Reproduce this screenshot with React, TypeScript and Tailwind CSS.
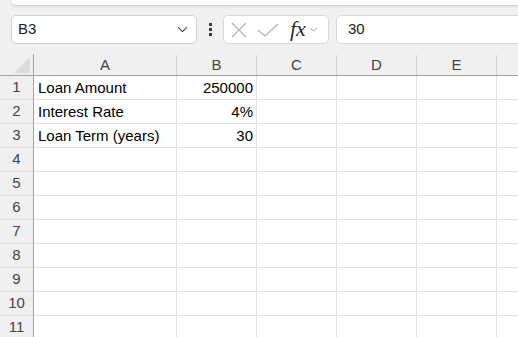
import { ChevronDown } from 'lucide-react';

const columns = ['A', 'B', 'C', 'D', 'E', 'F'];

const data: Record<number, { a?: string; b?: string }> = {
  1: { a: 'Loan Amount', b: '250000' },
  2: { a: 'Interest Rate', b: '4%' },
  3: { a: 'Loan Term (years)', b: '30' },
};

const rows = Array.from({ length: 11 }, (_, i) => i + 1);

function App() {
  return (
    <div
      className="w-[518px] h-[337px] overflow-hidden bg-[#f0f0f0] text-black"
      style={{ fontFamily: '"Liberation Sans", Arial, sans-serif' }}
    >
      {/* ribbon bottom edge */}
      <div className="h-[5px] ml-[11px] -mr-4 bg-white rounded-bl-lg shadow-[0_1px_3px_rgba(0,0,0,0.18)]" />

      {/* formula bar */}
      <div className="flex items-stretch h-[29px] mt-[10px] pl-[11px] -mr-4">
        <div className="w-[186px] flex items-center justify-between bg-white border border-[#d1d1d1] rounded-[5px] pl-[6px] pr-[5px]">
          <span className="text-[15px] text-[#1b1b1b]">B3</span>
          <ChevronDown size={17} strokeWidth={1.5} className="text-[#404040]" />
        </div>
        <div className="w-[26px] flex flex-col items-center justify-center gap-[2px]">
          <span className="w-[3px] h-[3px] bg-[#3c3c3c]" />
          <span className="w-[3px] h-[3px] bg-[#3c3c3c]" />
          <span className="w-[3px] h-[3px] bg-[#3c3c3c]" />
        </div>
        <div className="w-[106px] flex items-center bg-white border border-[#d9d9d9] rounded-[5px] pl-[7px]">
          <svg width="16" height="16" viewBox="0 0 16 16" className="text-[#b5b5b5]">
            <path d="M1 1 L15 15 M15 1 L1 15" stroke="currentColor" strokeWidth="1.3" fill="none" />
          </svg>
          <svg width="22" height="14" viewBox="0 0 22 14" className="ml-[10px] text-[#b5b5b5]">
            <path d="M1 7 L8 13 L21 1" stroke="currentColor" strokeWidth="1.3" fill="none" />
          </svg>
          <span
            className="ml-[11px] text-[22px] italic text-[#2b2b2b] leading-none -mt-[2px]"
            style={{ fontFamily: '"Liberation Serif", "Times New Roman", serif' }}
          >
            fx
          </span>
          <ChevronDown size={13} strokeWidth={1.4} className="ml-[1px] text-[#8a8a8a]" />
        </div>
        <div className="flex-1 ml-[7px] flex items-center bg-white border border-[#d9d9d9] rounded-[5px] pl-[11px]">
          <span className="text-[15px] text-[#1b1b1b]">30</span>
        </div>
      </div>

      {/* grid */}
      <div className="mt-[10px] overflow-hidden">
        <div className="grid grid-cols-[34px_143px_80px_80px_80px_80px_80px] w-[577px]">
          {/* header row */}
          <div className="h-[22px] bg-[#f0f0f0] border-r border-b border-[#a3a3a3] flex items-end justify-end pr-[3px] pb-[2px]">
            <svg width="16" height="16" viewBox="0 0 16 16">
              <path d="M16 0 L16 16 L0 16 Z" fill="#dcdcdc" />
            </svg>
          </div>
          {columns.map((c) => (
            <div
              key={c}
              className="h-[22px] bg-[#f0f0f0] border-b border-b-[#a3a3a3] flex items-end"
            >
              <div className="flex-1 h-[20px] border-r border-[#d4d4d4] flex items-center justify-center text-[15px] text-[#444]">
                {c !== 'F' && c}
              </div>
            </div>
          ))}

          {/* body rows */}
          {rows.map((r) => (
            <div key={r} className="contents">
              <div className="h-[24px] bg-[#f0f0f0] border-r border-r-[#a3a3a3] border-b border-b-[#dadada] flex items-center justify-center text-[15px] text-[#444]">
                {r}
              </div>
              <div className="h-[24px] bg-white border-r border-b border-[#e1e1e1] flex items-center pl-[4px] pt-[1px] text-[15px] whitespace-nowrap">
                {data[r]?.a}
              </div>
              <div className="h-[24px] bg-white border-r border-b border-[#e1e1e1] flex items-center justify-end pr-[3px] pt-[1px] text-[15px]">
                {data[r]?.b}
              </div>
              {columns.slice(2).map((c) => (
                <div key={c} className="h-[24px] bg-white border-r border-b border-[#e1e1e1]" />
              ))}
            </div>
          ))}
        </div>
      </div>
    </div>
  );
}

export default App;
